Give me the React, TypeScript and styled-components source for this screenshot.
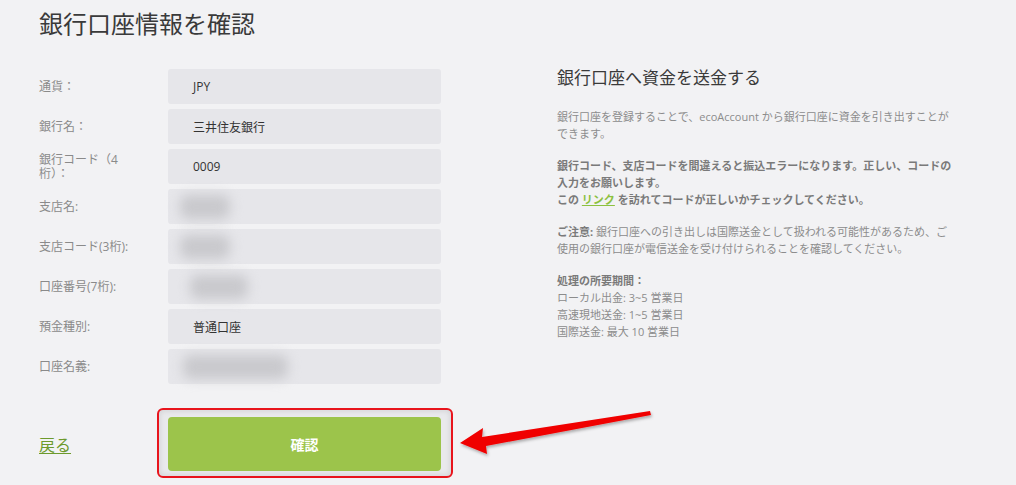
import React from "react";
import styled, { createGlobalStyle } from "styled-components";

const GlobalStyle = createGlobalStyle`
  html, body {
    margin: 0;
    padding: 0;
    background: #f2f2f4;
  }
  body {
    font-family: "Open Sans", "Noto Sans CJK JP", sans-serif;
    color: #333;
  }
  * { box-sizing: border-box; }
`;

const Page = styled.div`
  position: relative;
  width: 1016px;
  height: 485px;
  overflow: hidden;
  padding: 9px 0 0 39px;
`;

const Title = styled.h1`
  margin: 0;
  font-size: 24px;
  line-height: 29px;
  font-weight: 400;
  color: #3a3a3a;
`;

const Columns = styled.div`
  display: flex;
  gap: 116px;
  margin-top: 31px;
`;

const Left = styled.div`
  width: 402px;
  display: flex;
  flex-direction: column;
`;

const Form = styled.div`
  display: flex;
  flex-direction: column;
  gap: 5px;
`;

const Row = styled.div`
  display: grid;
  grid-template-columns: 129px 273px;
  align-items: center;
`;

const Label = styled.div`
  font-size: 12px;
  line-height: 14px;
  color: #8a8a8a;
  padding-right: 22px;
`;

const Field = styled.div`
  height: 35px;
  background: #e6e6ea;
  border-radius: 3px;
  display: flex;
  align-items: center;
  padding-left: 25px;
  font-size: 12px;
  color: #333;
`;

const Blurred = styled.div<{ $w: number; $offset: number }>`
  width: ${(p) => p.$w}px;
  height: 24px;
  margin-left: ${(p) => p.$offset}px;
  border-radius: 8px;
  background: #c9c9cd;
  filter: blur(6px);
`;

const Footer = styled.div`
  display: flex;
  align-items: center;
  margin-top: 33px;
`;

const BackLink = styled.a`
  width: 129px;
  font-size: 16px;
  color: #6d9a2c;
  text-decoration: underline;
  text-underline-offset: 2px;
  cursor: pointer;
`;

const ButtonFrame = styled.div`
  position: relative;
  width: 273px;
`;

const Highlight = styled.div`
  position: absolute;
  left: -11px;
  right: -12px;
  top: -9px;
  bottom: -7px;
  border: 2px solid #e8141c;
  border-radius: 6px;
  box-shadow: inset 0 0 6px rgba(0, 0, 0, 0.12);
  background: #e9e9ec;
  z-index: 0;
`;

const ConfirmButton = styled.button`
  position: relative;
  z-index: 1;
  width: 273px;
  height: 54px;
  border: none;
  border-radius: 4px;
  background: #9cc44b;
  color: #fff;
  font-family: "Open Sans", "Noto Sans CJK JP", sans-serif;
  font-size: 14px;
  font-weight: 700;
  cursor: pointer;
`;

const Right = styled.div`
  width: 396px;
`;

const SubTitle = styled.h2`
  margin: 0 0 21px;
  font-size: 17px;
  line-height: 18px;
  font-weight: 400;
  color: #3a3a3a;
`;

const Para = styled.p`
  margin: 0 0 15px;
  font-size: 11px;
  line-height: 17px;
  color: #8c8c8c;
`;

const Strong = styled.span`
  font-weight: 700;
  color: #7a7a7a;
`;

const GreenLink = styled.a`
  color: #8cc13f;
  text-decoration: underline;
  font-weight: 700;
`;

const ArrowLayer = styled.svg`
  position: absolute;
  left: 0;
  top: 0;
  pointer-events: none;
`;

type Item = { label: string; value?: string; blur?: [number, number] };

const items: Item[] = [
  { label: "通貨：", value: "JPY" },
  { label: "銀行名：", value: "三井住友銀行" },
  { label: "銀行コード（4桁）：", value: "0009" },
  { label: "支店名:", blur: [50, -13] },
  { label: "支店コード(3桁):", blur: [50, -13] },
  { label: "口座番号(7桁):", blur: [58, -3] },
  { label: "預金種別:", value: "普通口座" },
  { label: "口座名義:", blur: [105, -10] },
];

export default function App() {
  return (
    <>
      <GlobalStyle />
      <Page>
        <Title>銀行口座情報を確認</Title>
        <Columns>
          <Left>
            <Form>
              {items.map((it) => (
                <Row key={it.label}>
                  <Label>{it.label}</Label>
                  <Field>
                    {it.blur ? <Blurred $w={it.blur[0]} $offset={it.blur[1]} /> : it.value}
                  </Field>
                </Row>
              ))}
            </Form>
            <Footer>
              <BackLink>戻る</BackLink>
              <ButtonFrame>
                <Highlight />
                <ConfirmButton>確認</ConfirmButton>
              </ButtonFrame>
            </Footer>
          </Left>
          <Right>
            <SubTitle>銀行口座へ資金を送金する</SubTitle>
            <Para>
              銀行口座を登録することで、ecoAccount から銀行口座に資金を引き出すことができます。
            </Para>
            <Para>
              <Strong>
                銀行コード、支店コードを間違えると振込エラーになります。正しい、コードの入力をお願いします。
                <br />
                この <GreenLink>リンク</GreenLink> を訪れてコードが正しいかチェックしてください。
              </Strong>
            </Para>
            <Para>
              <Strong>ご注意:</Strong> 銀行口座への引き出しは国際送金として扱われる可能性があるため、ご使用の銀行口座が電信送金を受け付けられることを確認してください。
            </Para>
            <Para>
              <Strong>処理の所要期間：</Strong>
              <br />
              ローカル出金: 3~5 営業日
              <br />
              高速現地送金: 1~5 営業日
              <br />
              国際送金: 最大 10 営業日
            </Para>
          </Right>
        </Columns>
        <ArrowLayer width="1016" height="485" viewBox="0 0 1016 485">
          <defs>
            <filter id="arrowShadow" x="-10%" y="-50%" width="120%" height="200%">
              <feDropShadow dx="1" dy="2" stdDeviation="1.5" floodColor="#000" floodOpacity="0.3" />
            </filter>
          </defs>
          <polygon
            points="460,443 483,428 482,437 650,411 651,415 486,446 487,454"
            fill="#f00000"
            filter="url(#arrowShadow)"
          />
        </ArrowLayer>
      </Page>
    </>
  );
}
